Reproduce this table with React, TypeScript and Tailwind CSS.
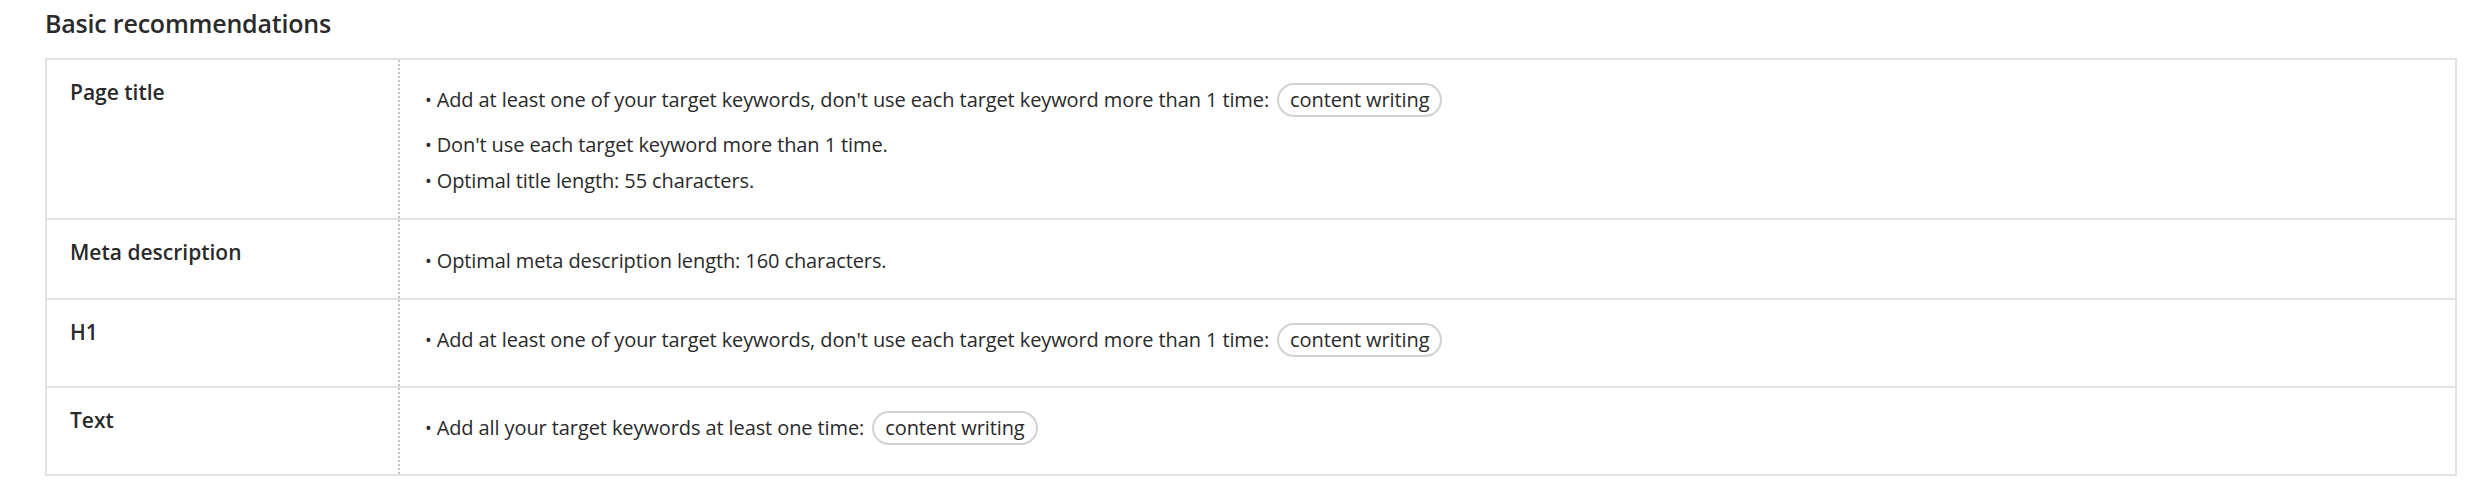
import React from 'react';

type Item = { text: string; keyword?: string };

const rows: { label: string; items: Item[] }[] = [
  {
    label: 'Page title',
    items: [
      { text: "Add at least one of your target keywords, don't use each target keyword more than 1 time:", keyword: 'content writing' },
      { text: "Don't use each target keyword more than 1 time." },
      { text: 'Optimal title length: 55 characters.' },
    ],
  },
  {
    label: 'Meta description',
    items: [{ text: 'Optimal meta description length: 160 characters.' }],
  },
  {
    label: 'H1',
    items: [
      { text: "Add at least one of your target keywords, don't use each target keyword more than 1 time:", keyword: 'content writing' },
    ],
  },
  {
    label: 'Text',
    items: [{ text: 'Add all your target keywords at least one time:', keyword: 'content writing' }],
  },
];

const Chip = ({ children }: { children: React.ReactNode }) => (
  <span className="ml-[8px] inline-flex h-[34px] items-center rounded-full border-2 border-[#d2d2d2] px-[11px]">
    {children}
  </span>
);

const App = () => {
  return (
    <div className="min-h-screen bg-white pl-[45px] pr-[17px] pt-[7px] text-[#2a2a2a]" style={{ fontFamily: '"Open Sans", "Noto Sans", sans-serif' }}>
      <h2 className="mb-[19px] text-[25px] font-semibold leading-[32px] tracking-[-0.2px]">Basic recommendations</h2>

      <div className="border-2 border-[#e2e2e2]">
        {rows.map((row, i) => (
          <div key={row.label} className={`grid grid-cols-[353px_1fr] ${i > 0 ? 'border-t-2 border-[#e2e2e2]' : ''}`}>
            <div className="border-r-2 border-dotted border-[#c4c4c4] pl-[23px] pt-[18px] text-[21px] font-semibold leading-[28px]">
              {row.label}
            </div>
            {/* flex column so the item margins don't collapse */}
            <ul className="flex flex-col pb-[17px] pl-[25px] pt-[25px] text-[20px] tracking-[-0.1px]">
              {row.items.map((item, j) => (
                <li
                  key={j}
                  className={`flex items-center ${item.keyword ? '-mt-[2px] mb-[12px] h-[34px]' : 'mb-[7px] mt-[3px] h-[26px]'}`}
                >
                  <span className="mr-[5px] text-[18px]">•</span>
                  <span>{item.text}</span>
                  {item.keyword && <Chip>{item.keyword}</Chip>}
                </li>
              ))}
            </ul>
          </div>
        ))}
      </div>
    </div>
  );
};

export default App;
